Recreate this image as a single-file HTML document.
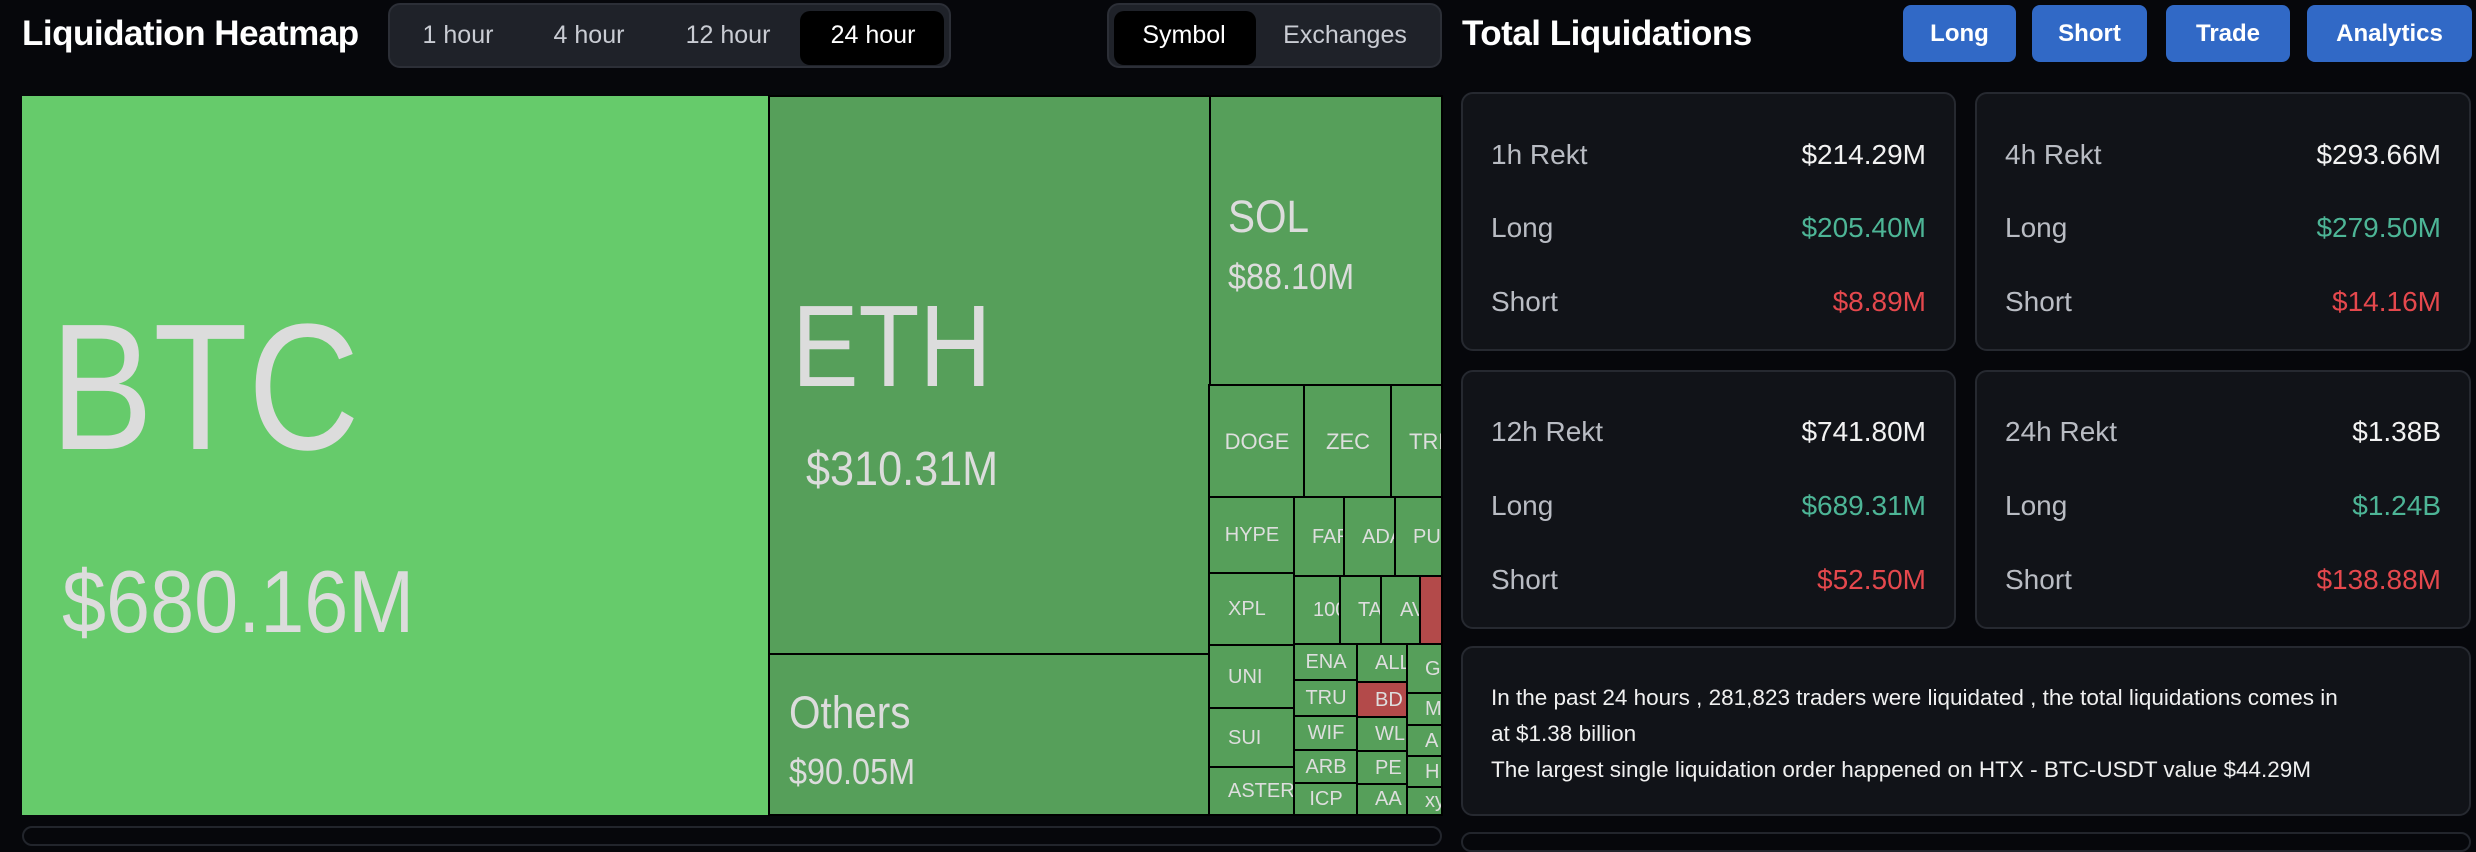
<!DOCTYPE html>
<html><head><meta charset="utf-8"><style>
*{margin:0;padding:0;box-sizing:border-box}
body{width:2476px;height:838px;background:#06070b;font-family:"Liberation Sans",sans-serif;position:relative;overflow:hidden;color:#e6e6e6}
.a{position:absolute}
.t{position:absolute;white-space:nowrap;transform-origin:0 0}
.grp{position:absolute;background:#1f2229;border:2px solid #2c2f37;border-radius:12px}
.tab{position:absolute;font-size:25px;color:#c9ccd3;top:21px;transform:translateX(-50%)}
.act{position:absolute;background:#000;border-radius:10px}
.btn{position:absolute;top:5px;height:57px;background:#3169c6;border-radius:8px;color:#fff;font-weight:bold;font-size:24px;display:flex;align-items:center;justify-content:center}
.card{position:absolute;background:#111318;border:2px solid #262930;border-radius:12px}
.lab{position:absolute;font-size:28px;color:#b9bcc3}
.val{position:absolute;font-size:28px;right:28px;color:#f2f2f2}
.g{color:#4db596}.r{color:#e5484d}
.tile{position:absolute;background:#569f5a;outline:2px solid #000;outline-offset:-1px;overflow:hidden;color:#dedede;font-size:20px;display:flex;align-items:center;justify-content:center;white-space:nowrap}
.red{background:#b34a4a}
</style></head><body>
<div class="t" style="left:22px;top:14px;font-size:35px;font-weight:bold;color:#fff;letter-spacing:-0.5px">Liquidation Heatmap</div>
<div class="grp" style="left:388px;top:3px;width:563px;height:65px">
<div class="act" style="left:410px;top:6px;width:144px;height:54px"></div>
</div>
<div class="tab" style="left:458px">1 hour</div>
<div class="tab" style="left:589px">4 hour</div>
<div class="tab" style="left:728px">12 hour</div>
<div class="tab" style="left:873px;color:#fff">24 hour</div>
<div class="grp" style="left:1107px;top:3px;width:335px;height:65px">
<div class="act" style="left:5px;top:6px;width:142px;height:54px"></div>
</div>
<div class="tab" style="left:1184px;color:#fff">Symbol</div>
<div class="tab" style="left:1345px">Exchanges</div>

<!-- heatmap -->
<div class="a" style="left:22px;top:96px;width:747px;height:719px;background:#66cb6b"></div>
<div class="t" style="left:50px;top:298px;font-size:180px;color:#dcdcdc;line-height:1;transform:scaleX(0.86)">BTC</div>
<div class="t" style="left:62px;top:558px;font-size:88px;color:#dcdcdc;line-height:1;transform:scaleX(0.9)">$680.16M</div>
<div class="tile" style="left:769px;top:96px;width:441px;height:558px"></div>
<div class="t" style="left:792px;top:288px;font-size:116px;color:#dcdcdc;line-height:1;transform:scaleX(0.86)">ETH</div>
<div class="t" style="left:806px;top:446px;font-size:48px;color:#dcdcdc;line-height:1;transform:scaleX(0.9)">$310.31M</div>
<div class="tile" style="left:769px;top:654px;width:441px;height:161px"></div>
<div class="t" style="left:789px;top:690px;font-size:45px;color:#dcdcdc;line-height:1;transform:scaleX(0.9)">Others</div>
<div class="t" style="left:789px;top:754px;font-size:36px;color:#dcdcdc;line-height:1;transform:scaleX(0.9)">$90.05M</div>
<div class="tile" style="left:1210px;top:96px;width:232px;height:289px"></div>
<div class="t" style="left:1228px;top:194px;font-size:45px;color:#dcdcdc;line-height:1;transform:scaleX(0.9)">SOL</div>
<div class="t" style="left:1228px;top:259px;font-size:36px;color:#dcdcdc;line-height:1;transform:scaleX(0.9)">$88.10M</div>

<div class="tile" style="left:1209px;top:385px;width:96px;height:113px;font-size:22px">DOGE</div>
<div class="tile" style="left:1304px;top:385px;width:88px;height:113px;font-size:22px">ZEC</div>
<div class="tile" style="left:1391px;top:385px;width:51px;height:113px;justify-content:flex-start;padding-left:18px;font-size:22px">TRE</div>
<div class="tile" style="left:1209px;top:497px;width:86px;height:77px">HYPE</div>
<div class="tile" style="left:1209px;top:573px;width:86px;height:73px;justify-content:flex-start;padding-left:19px">XPL</div>
<div class="tile" style="left:1209px;top:645px;width:86px;height:64px;justify-content:flex-start;padding-left:19px">UNI</div>
<div class="tile" style="left:1209px;top:708px;width:86px;height:60px;justify-content:flex-start;padding-left:19px">SUI</div>
<div class="tile" style="left:1209px;top:767px;width:86px;height:48px;justify-content:flex-start;padding-left:19px">ASTER</div>
<div class="tile" style="left:1294px;top:497px;width:51px;height:80px;justify-content:flex-start;padding-left:18px">FAR</div>
<div class="tile" style="left:1344px;top:497px;width:52px;height:80px;justify-content:flex-start;padding-left:18px">ADA</div>
<div class="tile" style="left:1395px;top:497px;width:47px;height:80px;justify-content:flex-start;padding-left:18px">PU</div>
<div class="tile" style="left:1294px;top:576px;width:47px;height:69px;justify-content:flex-start;padding-left:19px">100</div>
<div class="tile" style="left:1340px;top:576px;width:42px;height:69px;justify-content:flex-start;padding-left:18px">TA</div>
<div class="tile" style="left:1381px;top:576px;width:40px;height:69px;justify-content:flex-start;padding-left:19px">AV</div>
<div class="tile red" style="left:1420px;top:576px;width:22px;height:69px"></div>
<div class="tile" style="left:1294px;top:644px;width:64px;height:37px">ENA</div>
<div class="tile" style="left:1294px;top:680px;width:64px;height:37px">TRU</div>
<div class="tile" style="left:1294px;top:716px;width:64px;height:35px">WIF</div>
<div class="tile" style="left:1294px;top:750px;width:64px;height:34px">ARB</div>
<div class="tile" style="left:1294px;top:783px;width:64px;height:32px">ICP</div>
<div class="tile" style="left:1357px;top:644px;width:51px;height:39px;justify-content:flex-start;padding-left:18px">ALL</div>
<div class="tile red" style="left:1357px;top:682px;width:51px;height:36px;justify-content:flex-start;padding-left:18px">BD</div>
<div class="tile" style="left:1357px;top:717px;width:51px;height:35px;justify-content:flex-start;padding-left:18px">WL</div>
<div class="tile" style="left:1357px;top:751px;width:51px;height:34px;justify-content:flex-start;padding-left:18px">PE</div>
<div class="tile" style="left:1357px;top:784px;width:51px;height:31px;justify-content:flex-start;padding-left:18px">AA</div>
<div class="tile" style="left:1407px;top:644px;width:35px;height:50px;justify-content:flex-start;padding-left:18px">G</div>
<div class="tile" style="left:1407px;top:693px;width:35px;height:33px;justify-content:flex-start;padding-left:18px">M</div>
<div class="tile" style="left:1407px;top:725px;width:35px;height:32px;justify-content:flex-start;padding-left:18px">A</div>
<div class="tile" style="left:1407px;top:756px;width:35px;height:32px;justify-content:flex-start;padding-left:18px">H</div>
<div class="tile" style="left:1407px;top:787px;width:35px;height:28px;justify-content:flex-start;padding-left:18px">xy</div>
<div class="a" style="left:22px;top:826px;width:1420px;height:20px;border:2px solid #22252c;border-radius:10px"></div>

<!-- right -->
<div class="t" style="left:1462px;top:14px;font-size:35px;font-weight:bold;color:#fff;letter-spacing:-0.5px">Total Liquidations</div>
<div class="btn" style="left:1903px;width:113px">Long</div>
<div class="btn" style="left:2032px;width:115px">Short</div>
<div class="btn" style="left:2166px;width:124px">Trade</div>
<div class="btn" style="left:2307px;width:165px">Analytics</div>

<div class="card" style="left:1461px;top:92px;width:495px;height:259px">
<div class="lab" style="left:28px;top:45px">1h Rekt</div><div class="val" style="top:45px">$214.29M</div>
<div class="lab" style="left:28px;top:118px">Long</div><div class="val g" style="top:118px">$205.40M</div>
<div class="lab" style="left:28px;top:192px">Short</div><div class="val r" style="top:192px">$8.89M</div>
</div>
<div class="card" style="left:1975px;top:92px;width:496px;height:259px">
<div class="lab" style="left:28px;top:45px">4h Rekt</div><div class="val" style="top:45px">$293.66M</div>
<div class="lab" style="left:28px;top:118px">Long</div><div class="val g" style="top:118px">$279.50M</div>
<div class="lab" style="left:28px;top:192px">Short</div><div class="val r" style="top:192px">$14.16M</div>
</div>
<div class="card" style="left:1461px;top:370px;width:495px;height:259px">
<div class="lab" style="left:28px;top:44px">12h Rekt</div><div class="val" style="top:44px">$741.80M</div>
<div class="lab" style="left:28px;top:118px">Long</div><div class="val g" style="top:118px">$689.31M</div>
<div class="lab" style="left:28px;top:192px">Short</div><div class="val r" style="top:192px">$52.50M</div>
</div>
<div class="card" style="left:1975px;top:370px;width:496px;height:259px">
<div class="lab" style="left:28px;top:44px">24h Rekt</div><div class="val" style="top:44px">$1.38B</div>
<div class="lab" style="left:28px;top:118px">Long</div><div class="val g" style="top:118px">$1.24B</div>
<div class="lab" style="left:28px;top:192px">Short</div><div class="val r" style="top:192px">$138.88M</div>
</div>
<div class="card" style="left:1461px;top:646px;width:1010px;height:170px">
<div class="a" style="left:28px;top:32px;font-size:22.5px;line-height:36px;color:#f0f0f0;width:980px">In the past 24 hours , 281,823 traders were liquidated , the total liquidations comes in<br>at $1.38 billion<br>The largest single liquidation order happened on HTX - BTC-USDT value $44.29M</div>
</div>
<div class="a" style="left:1461px;top:832px;width:1010px;height:20px;border:2px solid #22252c;border-radius:10px"></div>
</body></html>
